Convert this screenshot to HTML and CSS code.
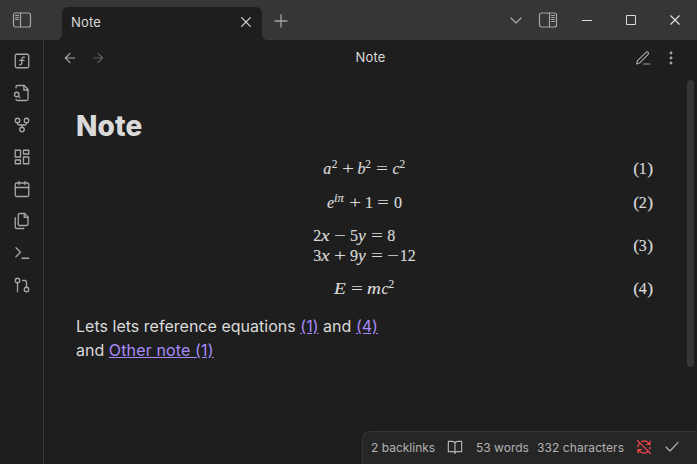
FILE: index.html
```html
<!DOCTYPE html>
<html lang="en">
<head>
<meta charset="utf-8">
<title>Note</title>
<link rel="stylesheet" href="styles.css">
</head>
<body>
<div class="app">
  <header class="titlebar">
    <div class="corner"><svg class="icon panel" viewBox="0 0 20 18"><rect x="1.5" y="2" width="17" height="14" rx="2"/><path d="M8.500 2V16M3.500 4.500h3M3.500 6.500h3M3.500 8.500h3"/></svg></div>
    <div class="tab"><span>Note</span><svg class="icon tab-close" viewBox="0 0 16 16"><path d="M3.700 3.700l8.600 8.600M12.300 3.700l-8.600 8.600"/></svg></div>
    <svg class="icon plus" viewBox="0 0 16 16"><path d="M8 2v12M2 8h12"/></svg>
    <div class="controls">
      <svg class="icon chevron" viewBox="0 0 16 16"><path d="M3 6l5 5 5-5"/></svg>
      <svg class="icon panel" viewBox="0 0 20 18"><rect x="1.5" y="2" width="17" height="14" rx="2"/><path d="M11.500 2V16M13.500 4.500h3M13.500 6.500h3M13.500 8.500h3M13.500 10.500h3"/></svg>
      <svg class="win" viewBox="0 0 12 12"><path d="M1 6.500h10"/></svg>
      <svg class="win" viewBox="0 0 12 12"><rect x="1.500" y="1.500" width="9" height="9"/></svg>
      <svg class="win cross" viewBox="0 0 12 12"><path d="M1.500 1.500l9 9M10.500 1.500l-9 9"/></svg>
    </div>
  </header>
  <div class="workspace">
    <nav class="ribbon">
      <svg class="icon" viewBox="0 0 24 24"><rect x="3" y="3" width="18" height="18" rx="2"/><path d="M9 17c2 0 2.800-1 2.800-2.800V10c0-2 1-3.300 3.200-3M9 11.200h5.700"/></svg>
      <svg class="icon" viewBox="0 0 24 24"><path d="M14.500 2v6H20"/><path d="M4 5V4a2 2 0 0 1 2-2h9l5 5v13a2 2 0 0 1-2 2H6a2 2 0 0 1-2-1.500"/><circle cx="5" cy="14" r="3"/><path d="M9 18l-1.500-1.500"/></svg>
      <svg class="icon" viewBox="0 0 24 24"><circle cx="12" cy="18" r="3"/><circle cx="6" cy="6" r="3"/><circle cx="18" cy="6" r="3"/><path d="M18 9v1a2 2 0 0 1-2 2H8a2 2 0 0 1-2-2V9M12 12v3"/></svg>
      <svg class="icon" viewBox="0 0 24 24"><path d="M3 3h7v9H3zM14 3h7v5h-7zM14 12h7v9h-7zM3 16h7v5H3z"/></svg>
      <svg class="icon" viewBox="0 0 24 24"><rect x="3" y="4" width="18" height="18" rx="2"/><path d="M16 2v4M8 2v4M3 10h18"/></svg>
      <svg class="icon" viewBox="0 0 24 24"><path d="M15.500 2H8.600c-.4 0-.8.2-1.100.5-.3.3-.5.7-.5 1.100v12.800c0 .4.2.8.5 1.100.3.3.7.5 1.100.5h9.800c.4 0 .8-.2 1.100-.5.3-.3.5-.7.5-1.100V6.500L15.500 2z"/><path d="M3 7.600v12.800c0 .4.2.8.5 1.100.3.3.7.5 1.100.5h9.800M15 2v5h5"/></svg>
      <svg class="icon" viewBox="0 0 24 24"><path d="M4 17l6-6-6-6M12 19h9"/></svg>
      <svg class="icon" viewBox="0 0 24 24"><circle cx="18" cy="18" r="3"/><circle cx="6" cy="6" r="3"/><path d="M13 6h3a2 2 0 0 1 2 2v7M6 9v12"/></svg>
    </nav>
    <main class="pane">
      <div class="view-header">
        <div class="side">
          <svg class="icon" viewBox="0 0 24 24"><path d="M19 12H5M12 19l-7-7 7-7"/></svg>
          <svg class="icon faint" viewBox="0 0 24 24"><path d="M5 12h14M12 5l7 7-7 7"/></svg>
        </div>
        <div class="view-title">Note</div>
        <div class="side end">
          <svg class="icon" viewBox="0 0 24 24"><path d="M13 21h9M16.500 3.500a2.100 2.100 0 0 1 3.200 3L7.500 19 2.500 21l1.300-5z"/></svg>
          <svg class="icon dots" viewBox="0 0 24 24"><circle cx="12" cy="4.500" r="1.300"/><circle cx="12" cy="12" r="1.300"/><circle cx="12" cy="19.500" r="1.300"/></svg>
        </div>
      </div>
      <div class="scroller">
        <article class="note">
          <h1>Note</h1>
          <div class="eq"><div class="math"><i class="a">a</i><sup>2</sup><b class="bin">+</b><i class="bb">b</i><sup>2</sup><b class="rel">=</b><i class="c">c</i><sup>2</sup></div><div class="tag"><span>(</span>1<span>)</span></div></div>
          <div class="eq second"><div class="math"><i class="e">e</i><sup class="ip"><i>iπ</i></sup><b class="bin">+</b>1<b class="rel">=</b>0</div><div class="tag"><span>(</span>2<span>)</span></div></div>
          <div class="eq system"><div class="math"><div>2<i class="x">x</i><b class="bin">−</b>5<i class="y">y</i><b class="rel">=</b>8</div><div>3<i class="x">x</i><b class="bin">+</b>9<i class="y">y</i><b class="rel">=</b><b>−</b>12</div></div><div class="tag"><span>(</span>3<span>)</span></div></div>
          <div class="eq last"><div class="math"><i class="big-e">E</i><b class="rel">=</b><i class="m">m</i><i class="c">c</i><sup>2</sup></div><div class="tag"><span>(</span>4<span>)</span></div></div>
          <p>Lets lets reference equations <a>(1)</a> and <a>(4)</a><br>and <a class="other">Other note (1)</a></p>
        </article>
        <div class="thumb"></div>
      </div>
    </main>
  </div>
  <footer class="status">
    <span class="s1">2 backlinks</span>
    <svg class="icon book" viewBox="0 0 24 24"><path d="M2 3.500h6a4 4 0 0 1 4 3v15a3 3 0 0 0-3-2.500H2zM22 3.500h-6a4 4 0 0 0-4 3v15a3 3 0 0 1 3-2.500h7z"/></svg>
    <span class="s2">53 words</span>
    <span class="s3">332 characters</span>
    <svg class="icon sync" viewBox="0 0 24 24"><path d="M21 8L18.700 5.700A9 9 0 0 0 8.500 3.700M21 3v5h-5M21 12a9 9 0 0 1-.7 3.500M3 12a9 9 0 0 1 2.600-6.300M3 16l2.300 2.300A9 9 0 0 0 18.400 18.400M8 16H3v5M2 2l20 20"/></svg>
    <svg class="icon check" viewBox="0 0 24 24"><path d="M21 5L9 18l-6-6"/></svg>
  </footer>
</div>
</body>
</html>
```

FILE: styles.css
```css
* { box-sizing: border-box; }
body { margin: 0; background: #1e1e1e; color: #dadada; font-family: Inter, sans-serif; }
.app { position: relative; width: 697px; height: 464px; display: flex; flex-direction: column; overflow: hidden; }
.icon, .win { display: block; flex: none; fill: none; stroke: #a6a6a6; stroke-width: 1.75; stroke-linecap: round; stroke-linejoin: round; width: 18px; height: 18px; }
.titlebar { height: 40px; flex: none; display: flex; background: #363636; align-items: center; }
.corner { width: 62px; padding-left: 12px; }
.panel { width: 20px; height: 18px; stroke-width: 1.2; }
.tab { position: relative; width: 200px; height: 33px; margin-top: 7px; padding: 0 8px 3px 9px; display: flex; align-items: center; justify-content: space-between; background: #1e1e1e; border-radius: 6px 6px 0 0; font-size: 13px; letter-spacing: .15px; }
.tab::before, .tab::after { content: ""; position: absolute; bottom: 0; width: 5px; height: 5px; }
.tab::before { left: -5px; background: radial-gradient(circle at 0 0, #363636 4.5px, #1e1e1e 5px); }
.tab::after { right: -5px; background: radial-gradient(circle at 100% 0, #363636 4.5px, #1e1e1e 5px); }
.tab-close { width: 16px; height: 16px; stroke: #dadada; stroke-width: 1.2; }
.plus { width: 16px; height: 16px; margin: 2px 0 0 11px; stroke-width: 1.3; }
.controls { margin-left: auto; display: flex; align-items: center; padding-right: 16px; }
.chevron { width: 16px; height: 16px; margin-right: 14px; stroke-width: 1.3; }
.win { width: 12px; height: 12px; stroke: #dadada; stroke-width: 1; stroke-linecap: butt; margin-left: 32px; }
.cross { stroke-width: 1.3; }
.panel + .win { margin-left: 23px; }
.workspace { display: flex; flex: 1; min-height: 0; }
.ribbon { width: 44px; flex: none; border-right: 1px solid #363636; padding-top: 12px; display: flex; flex-direction: column; align-items: center; gap: 14px; }
.pane { flex: 1; display: flex; flex-direction: column; min-width: 0; }
.view-header { height: 36px; display: flex; align-items: center; padding: 0 18px; }
.view-header .icon { width: 16px; height: 16px; }
.side { flex: 1; display: flex; gap: 12px; }
.end { justify-content: flex-end; }
.faint { opacity: .45; }
.dots circle { fill: #a6a6a6; }
.view-title { font-size: 13px; line-height: 20px; letter-spacing: .15px; margin-top: -2px; }
.scroller { flex: 1; display: flex; justify-content: space-between; padding: 4px 3px 0 32px; }
.note { width: 577px; }
.thumb { width: 7px; height: 287px; border-radius: 3.5px; background: #363636; }
h1 { margin: 29px 0 16px; font-size: 28px; line-height: 34px; font-weight: 800; letter-spacing: .1px; }
.eq { display: grid; grid-template: "cell" 1fr / 1fr; align-items: center; margin-bottom: 14px; font: 16px/20px "Liberation Serif", serif; -webkit-text-stroke: .15px; }
.math, .tag { grid-area: cell; white-space: nowrap; }
.math { justify-self: center; }
.tag { justify-self: end; }
.tag span { display: inline-block; width: 6.2px; text-align: center; transform: scale(1.1, 1.08); }
.eq.second { margin-bottom: 13px; }
.eq.system { margin-bottom: 13px; }
.math i, .math b { display: inline-block; transform-origin: 0 75%; }
.math b { width: 12.45px; font-weight: 400; transform: scaleX(1.33); -webkit-text-stroke: 0; }
.math b.bin { margin: 0 3.55px; }
.math b.rel { margin: 0 4.3px; }
.math sup { display: inline-block; width: 6.2px; font-size: 11.5px; line-height: 1; vertical-align: 6px; }
.math sup.ip { width: 11.1px; }
.math sup.ip i { transform: scaleX(1.1); }
.math i.a { width: 8.5px; }
.math i.bb { width: 7.6px; }
.math i.c { width: 7.1px; }
.math i.e { width: 7.5px; }
.math i.x { width: 9.2px; transform: scaleX(1.2); }
.math i.y { width: 8.4px; transform: scaleX(1.1); }
.math i.big-e { width: 12.2px; transform: scaleX(1.2); }
.math i.m { width: 14px; transform: scaleX(1.2); }
p { margin: 0; font-size: 16px; line-height: 24px; letter-spacing: .02px; }
.other { letter-spacing: .14px; }
.eq.last { margin-bottom: 15px; }
a { color: #a68af9; text-decoration: underline; }
.status { position: absolute; right: 0; bottom: 0; width: 335px; height: 33px; display: flex; align-items: center; padding: 0 0 2px 8px; border: 1px solid #363636; border-width: 1px 0 0 1px; border-radius: 8px 0 0 0; background: #262626; color: #b3b3b3; font-size: 12px; }
.status .icon { width: 16px; height: 16px; stroke: #b3b3b3; }
.s1 { width: 76px; }
.s2 { width: 61px; margin-left: 13px; }
.s3 { width: 99px; letter-spacing: .08px; }
.status .icon.sync { stroke: #fb464c; }
.check { margin-left: 12px; }
```
